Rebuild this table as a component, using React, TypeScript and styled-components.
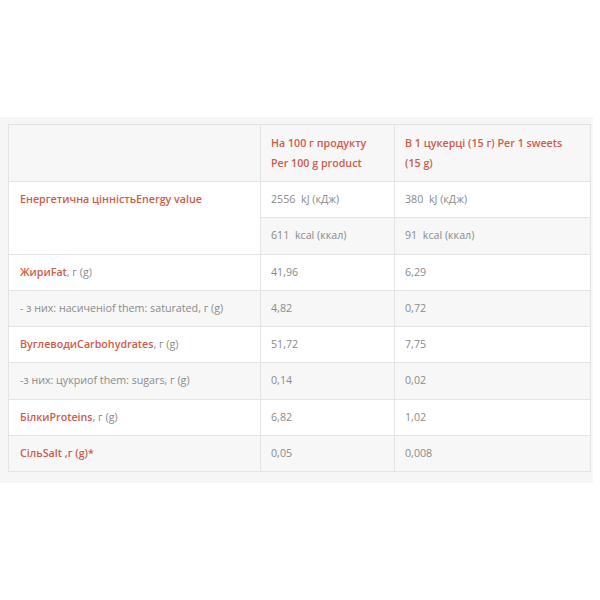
import React from "react";
import styled, { createGlobalStyle } from "styled-components";

const Global = createGlobalStyle`
  html, body { margin: 0; padding: 0; background: #ffffff; }
  body { font-family: "Open Sans", "Noto Sans", sans-serif; }
`;

const Panel = styled.div`
  margin-top: 117px;
  width: 593px;
  box-sizing: border-box;
  padding: 7px 2px 11px 8px;
  background: #f6f6f6;
`;

const Table = styled.table`
  width: 583px;
  border-collapse: collapse;
  border: 1px solid #e4e4e4;
  font-size: 10.7px;
  line-height: 20px;
  table-layout: fixed;
`;

const Row = styled.tr<{ $shade?: boolean }>`
  background: ${(p) => (p.$shade ? "#f7f7f7" : "#ffffff")};
`;

const Th = styled.th`
  text-align: left;
  vertical-align: top;
  padding: 8px 10px 8px 10px;
  border: 1px solid #e4e4e4;
  color: #d25a4a;
  font-weight: 600;
  background: #f7f7f7;
`;

const Td = styled.td<{ $first?: boolean; $bg?: string }>`
  vertical-align: top;
  height: 20.25px;
  padding: 7px 10px 8px ${(p) => (p.$first ? "11px" : "10px")};
  border: 1px solid #e4e4e4;
  color: #8a8a8a;
  ${(p) => (p.$bg ? `background: ${p.$bg};` : "")}
`;

const Name = styled.span`
  color: #d25a4a;
  font-weight: 600;
`;

const Gap = styled.span`
  white-space: pre;
`;

type R = { label: React.ReactNode; a: string; b: string; shade: boolean };

const rows: R[] = [
  { label: <><Name>ЖириFat</Name>, г (g)</>, a: "41,96", b: "6,29", shade: false },
  { label: <>- з них: насиченіof them: saturated, г (g)</>, a: "4,82", b: "0,72", shade: true },
  { label: <><Name>ВуглеводиCarbohydrates</Name>, г (g)</>, a: "51,72", b: "7,75", shade: false },
  { label: <>-з них: цукриof them: sugars, г (g)</>, a: "0,14", b: "0,02", shade: true },
  { label: <><Name>БілкиProteins</Name>, г (g)</>, a: "6,82", b: "1,02", shade: false },
  { label: <><Name>СільSalt ,г (g)*</Name></>, a: "0,05", b: "0,008", shade: true },
];

export default function App() {
  return (
    <>
      <Global />
      <Panel>
        <Table>
          <colgroup>
            <col style={{ width: 252 }} />
            <col style={{ width: 134 }} />
            <col />
          </colgroup>
          <thead>
            <tr>
              <Th></Th>
              <Th>На 100 г продукту Per 100 g product</Th>
              <Th>В 1 цукерці (15 г) Per 1 sweets (15 g)</Th>
            </tr>
          </thead>
          <tbody>
            <Row>
              <Td $first rowSpan={2} $bg="#ffffff">
                <Name>Енергетична цінністьEnergy value</Name>
              </Td>
              <Td>2556<Gap>  </Gap>kJ (кДж)</Td>
              <Td>380<Gap>  </Gap>kJ (кДж)</Td>
            </Row>
            <Row $shade>
              <Td>611<Gap>  </Gap>kcal (ккал)</Td>
              <Td>91<Gap>  </Gap>kcal (ккал)</Td>
            </Row>
            {rows.map((r, i) => (
              <Row key={i} $shade={r.shade}>
                <Td $first>{r.label}</Td>
                <Td>{r.a}</Td>
                <Td>{r.b}</Td>
              </Row>
            ))}
          </tbody>
        </Table>
      </Panel>
    </>
  );
}
